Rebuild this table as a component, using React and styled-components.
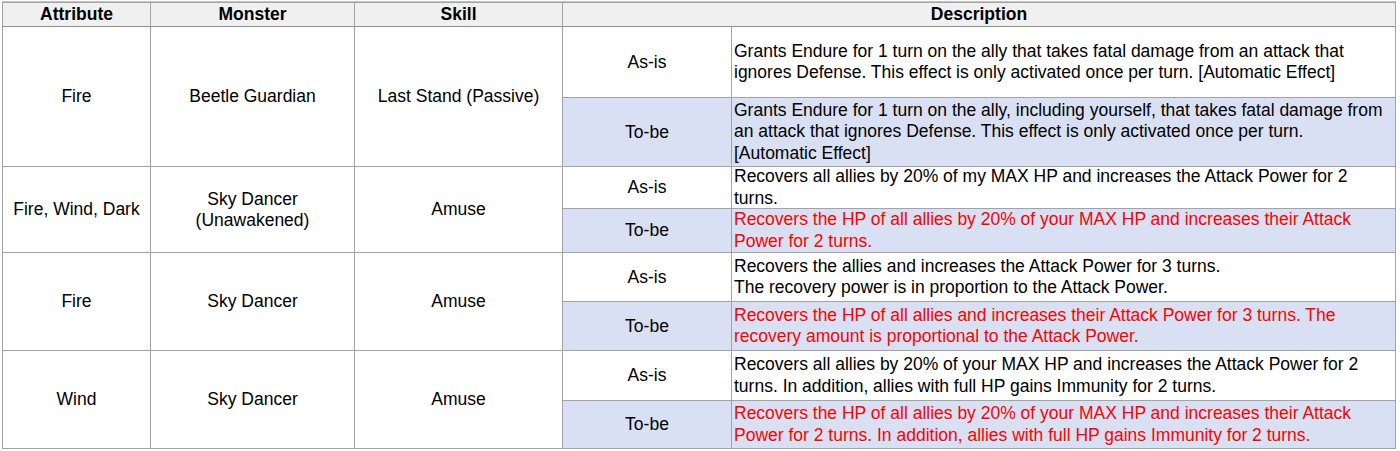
import React from 'react';
import styled, { createGlobalStyle } from 'styled-components';

const GlobalStyle = createGlobalStyle`
  html, body {
    margin: 0;
    padding: 0;
    background: #ffffff;
  }
  body {
    font-family: "Liberation Sans", Arial, sans-serif;
    color: #000;
  }
`;

const Page = styled.div`
  padding: 2px 0 0 2px;
  width: 1400px;
  height: 451px;
  box-sizing: border-box;
`;

const Table = styled.div`
  display: grid;
  grid-template-columns: 147px 203px 207px 168px 663px;
  grid-template-rows: 23px 70px 68px 41px 43px 48px 48px 49px 47px;
  gap: 1px;
  padding: 1px;
  width: max-content;
  background: #a3a3a3;
  border-top: 1px solid #c4c4c4;
  margin-top: -1px;
`;

const HeadCell = styled.div`
  grid-column: span ${p => p.$span || 1};
  background: #f0f0f0;
  font-weight: 700;
  font-size: 17.5px;
  display: flex;
  align-items: center;
  justify-content: center;
  border-bottom: 1px solid #8e8e8e;
  margin-bottom: -1px;
`;

const SpanCell = styled.div`
  grid-row: span 2;
  background: #fff;
  font-size: 17.5px;
  line-height: 21px;
  display: flex;
  align-items: center;
  justify-content: center;
  text-align: center;
`;

const LabelCell = styled.div`
  background: ${p => (p.$tobe ? '#d9e0f3' : '#fff')};
  font-size: 17.5px;
  display: flex;
  align-items: center;
  justify-content: center;
`;

const DescCell = styled.div`
  background: ${p => (p.$tobe ? '#d9e0f3' : '#fff')};
  color: ${p => (p.$red ? '#ff0000' : '#000')};
  font-size: 17.5px;
  line-height: 21.5px;
  display: flex;
  align-items: center;
  padding: 0 2px 0 2px;
  white-space: nowrap;
`;

const rows = [
  {
    attr: 'Fire',
    monster: ['Beetle Guardian'],
    skill: 'Last Stand (Passive)',
    asis: [
      'Grants Endure for 1 turn on the ally that takes fatal damage from an attack that',
      'ignores Defense. This effect is only activated once per turn. [Automatic Effect]',
    ],
    tobe: [
      'Grants Endure for 1 turn on the ally, including yourself, that takes fatal damage from',
      'an attack that ignores Defense. This effect is only activated once per turn.',
      '[Automatic Effect]',
    ],
    red: false,
  },
  {
    attr: 'Fire, Wind, Dark',
    monster: ['Sky Dancer', '(Unawakened)'],
    skill: 'Amuse',
    asis: [
      'Recovers all allies by 20% of my MAX HP and increases the Attack Power for 2',
      'turns.',
    ],
    tobe: [
      'Recovers the HP of all allies by 20% of your MAX HP and increases their Attack',
      'Power for 2 turns.',
    ],
    red: true,
  },
  {
    attr: 'Fire',
    monster: ['Sky Dancer'],
    skill: 'Amuse',
    asis: [
      'Recovers the allies and increases the Attack Power for 3 turns.',
      'The recovery power is in proportion to the Attack Power.',
    ],
    tobe: [
      'Recovers the HP of all allies and increases their Attack Power for 3 turns. The',
      'recovery amount is proportional to the Attack Power.',
    ],
    red: true,
  },
  {
    attr: 'Wind',
    monster: ['Sky Dancer'],
    skill: 'Amuse',
    asis: [
      'Recovers all allies by 20% of your MAX HP and increases the Attack Power for 2',
      'turns. In addition, allies with full HP gains Immunity for 2 turns.',
    ],
    tobe: [
      'Recovers the HP of all allies by 20% of your MAX HP and increases their Attack',
      'Power for 2 turns. In addition, allies with full HP gains Immunity for 2 turns.',
    ],
    red: true,
  },
];

const Lines = ({ lines }) => (
  <div>
    {lines.map((l, i) => (
      <React.Fragment key={i}>
        {i > 0 && <br />}
        {l}
      </React.Fragment>
    ))}
  </div>
);

export default function App() {
  return (
    <Page>
      <GlobalStyle />
      <Table>
        <HeadCell>Attribute</HeadCell>
        <HeadCell>Monster</HeadCell>
        <HeadCell>Skill</HeadCell>
        <HeadCell $span={2}>Description</HeadCell>
        {rows.map((r, i) => (
          <React.Fragment key={i}>
            <SpanCell>{r.attr}</SpanCell>
            <SpanCell><Lines lines={r.monster} /></SpanCell>
            <SpanCell>{r.skill}</SpanCell>
            <LabelCell>As-is</LabelCell>
            <DescCell><Lines lines={r.asis} /></DescCell>
            <LabelCell $tobe>To-be</LabelCell>
            <DescCell $tobe $red={r.red}><Lines lines={r.tobe} /></DescCell>
          </React.Fragment>
        ))}
      </Table>
    </Page>
  );
}
